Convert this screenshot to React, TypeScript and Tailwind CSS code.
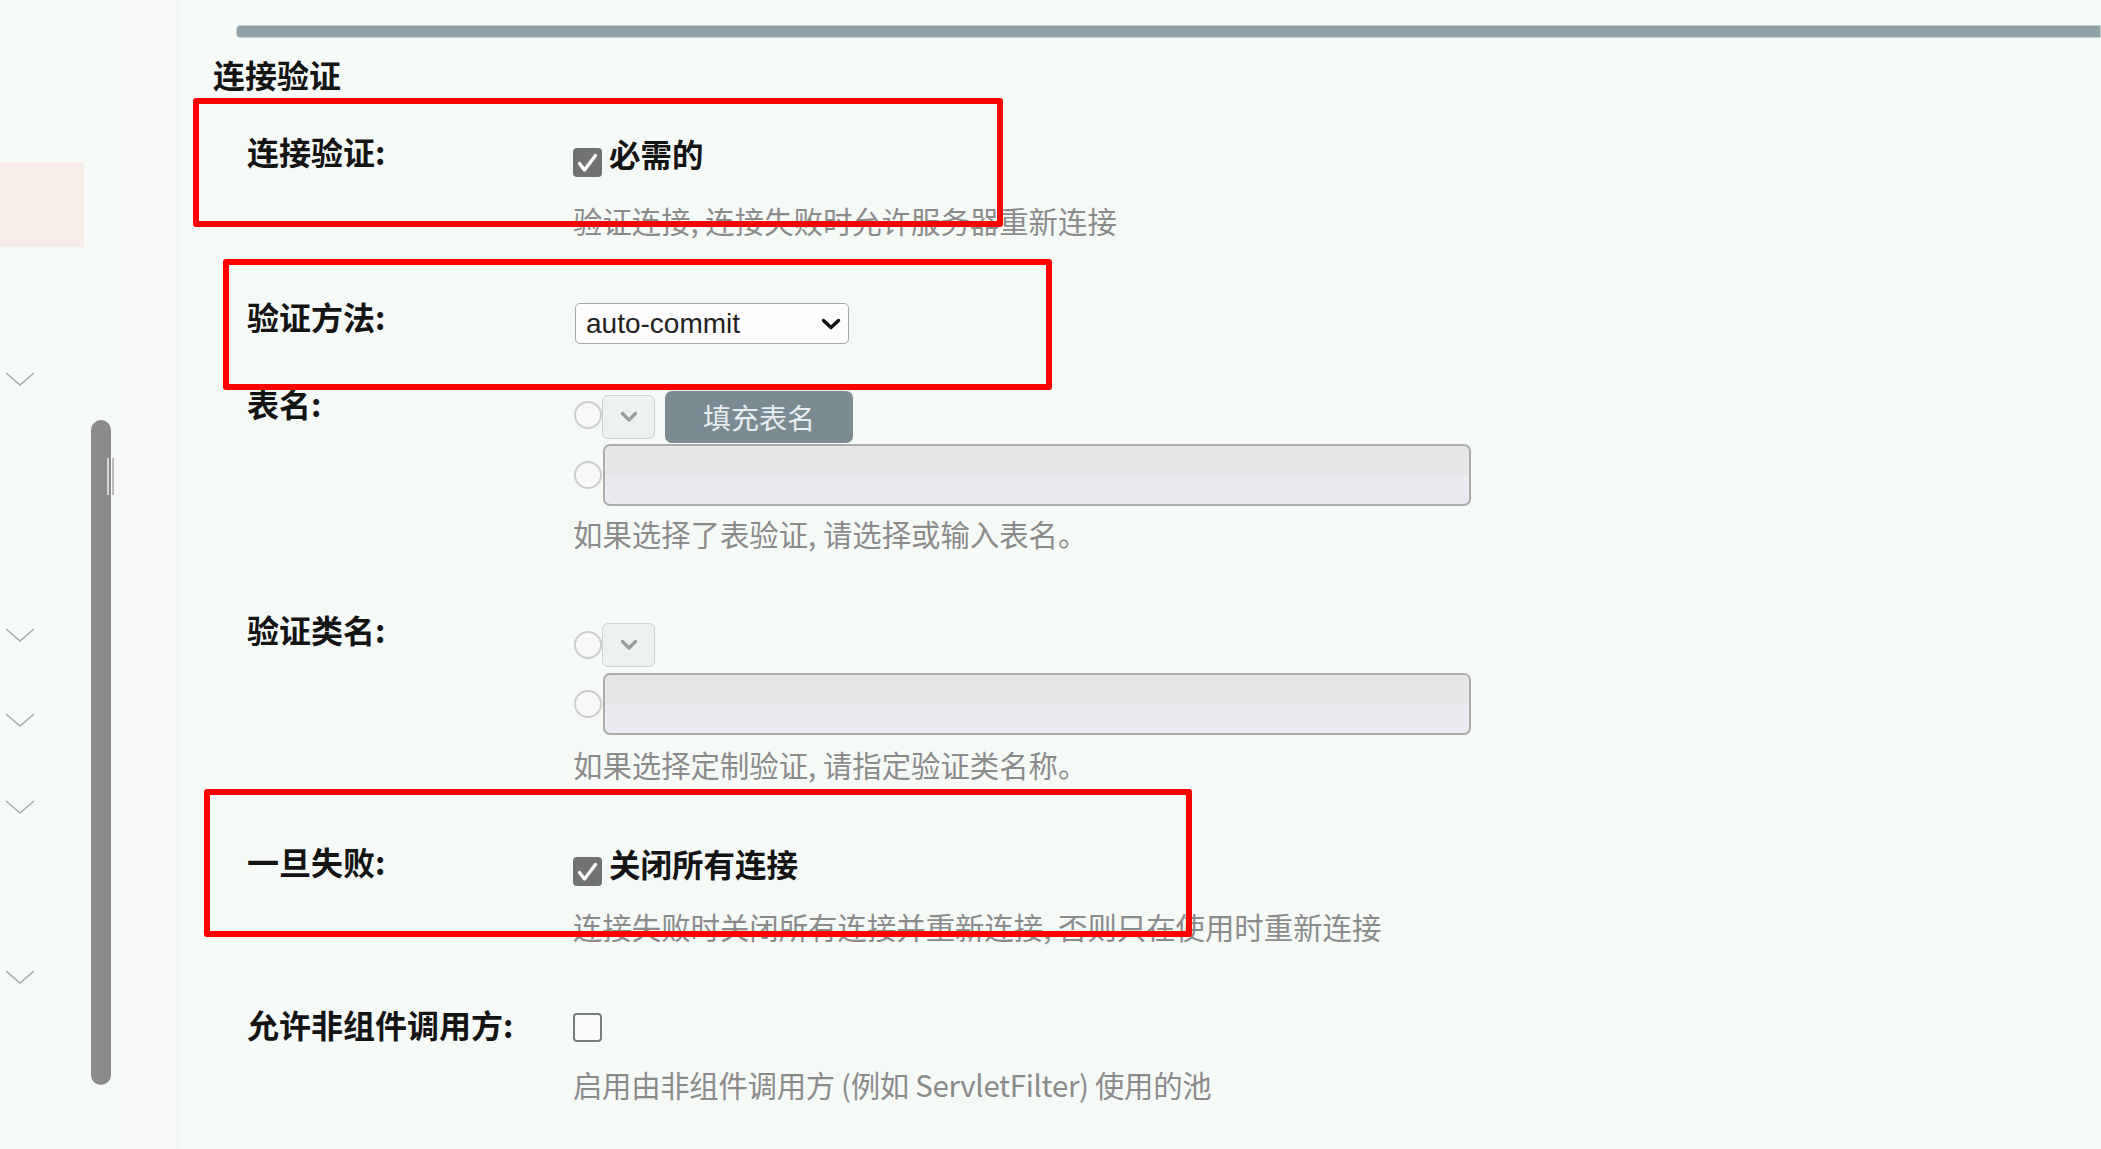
import React from 'react';

const cjk = "font-['Noto_Sans_CJK_SC',sans-serif]";

function Chevron({ className = '' }: { className?: string }) {
  return (
    <svg className={className} width="32" height="16" viewBox="0 0 32 16" fill="none">
      <path d="M2 2 L16 14 L30 2" stroke="#a9a9a9" strokeWidth="1.6" />
    </svg>
  );
}

function Check({ checked, className = '' }: { checked?: boolean; className?: string }) {
  if (!checked) {
    return <div className={`w-[29px] h-[29px] shrink-0 rounded-[4px] border-2 border-[#7c7c7c] bg-[#fbfbfb] ${className}`} />;
  }
  return (
    <div className={`w-[29px] h-[29px] shrink-0 rounded-[4px] bg-[#707370] flex items-center justify-center ${className}`}>
      <svg width="29" height="29" viewBox="0 0 29 29" fill="none">
        <path d="M6.5 15.5 L11.5 22 L22.5 7.5" stroke="#ffffff" strokeWidth="3.4" strokeLinecap="round" strokeLinejoin="round" />
      </svg>
    </div>
  );
}

function Radio({ className = '' }: { className?: string }) {
  return <div className={`w-[28px] h-[28px] shrink-0 rounded-full border-2 border-[#cdcdcd] bg-[#f8f8f8] ${className}`} />;
}

function MiniSelect({ className = '' }: { className?: string }) {
  return (
    <div className={`w-[53px] h-[44px] shrink-0 rounded-[6px] border-[1.5px] border-[#cfd2d2] bg-[#eef1f1] flex items-center justify-center ${className}`}>
      <svg width="20" height="14" viewBox="0 0 20 14" fill="none">
        <path d="M3.5 3.5 L10 10 L16.5 3.5" stroke="#999c9c" strokeWidth="3.2" strokeLinecap="round" strokeLinejoin="round" />
      </svg>
    </div>
  );
}

function TextInput() {
  return (
    <div className="ml-[1px] w-[868px] h-[62px] rounded-[7px] border-2 border-[#acacac] bg-linear-to-b from-[#e6e6e6] from-50% to-[#e9ebf0] to-50%" />
  );
}

function Label({ children }: { children: React.ReactNode }) {
  return <div className={`${cjk} text-[32px] leading-[36px] font-bold text-[#141414] whitespace-nowrap`}>{children}</div>;
}

function Desc({ children, className = '' }: { children: React.ReactNode; className?: string }) {
  return <div className={`${cjk} text-[29.4px] leading-[36px] text-[#8b8b8b] whitespace-nowrap ${className}`}>{children}</div>;
}

export default function App() {
  return (
    <div className="relative w-full h-[1149px] overflow-hidden flex bg-[#f6faf7]">
      {/* Left tree panel */}
      <div className="w-[118px] shrink-0 flex bg-[#f6faf7]">
        <div className="w-[91px] flex flex-col">
          <div className="mt-[162px] h-[85px] w-[84px] bg-[#f8ece8]" />
          <Chevron className="mt-[124px] ml-[4px]" />
          <Chevron className="mt-[240px] ml-[4px]" />
          <Chevron className="mt-[69px] ml-[4px]" />
          <Chevron className="mt-[71px] ml-[4px]" />
          <Chevron className="mt-[154px] ml-[4px]" />
        </div>
        <div className="relative mt-[420px] w-[20px] h-[665px] rounded-full bg-[#8a8a8a]">
          <div className="absolute left-[16px] top-[38px] h-[37px] w-[7px] flex justify-between">
            <div className="w-[2px] h-full bg-[#d6d6d6]" />
            <div className="w-[2px] h-full bg-[#bdbdbd]" />
          </div>
        </div>
      </div>

      {/* Middle gutter */}
      <div className="w-[60px] shrink-0 bg-[#f8f8f8] border-r border-[#edefee]" />

      {/* Main form */}
      <main className="flex-1 flex flex-col pt-[25px]">
        <div className="ml-[58px] h-[13px] bg-[#8fa0a6] border border-[#c6ced1] rounded-l-[4px]" />
        <h2 className={`${cjk} ml-[35px] mt-[18px] text-[32px] leading-[36px] font-bold text-[#141414]`}>连接验证</h2>

        <div className="ml-[69px] flex flex-col">
          {/* 连接验证 */}
          <div className="mt-[41px] grid grid-cols-[326px_1fr]">
            <Label>连接验证:</Label>
            <div className="flex flex-col">
              <div className="flex items-start gap-[7px]">
                <Check checked className="mt-[15px]" />
                <span className={`${cjk} mt-[2px] text-[31.5px] leading-[36px] font-bold text-[#141414]`}>必需的</span>
              </div>
              <Desc className="mt-[25px]">验证连接, 连接失败时允许服务器重新连接</Desc>
            </div>
          </div>

          {/* 验证方法 */}
          <div className="mt-[60px] grid grid-cols-[326px_1fr]">
            <Label>验证方法:</Label>
            <div className="flex flex-col">
              <div className="mt-[5px] ml-[2px] w-[274px] h-[41px] rounded-[5px] border-[1.5px] border-[#a9a9a9] bg-[#fdfdfd] flex items-center justify-between pl-[10px] pr-[7px]">
                <span className="font-['Liberation_Sans',sans-serif] text-[28px] leading-none text-[#222]">auto-commit</span>
                <svg width="20" height="12" viewBox="0 0 20 12" fill="none">
                  <path d="M2.5 2.5 L10 9.5 L17.5 2.5" stroke="#111" strokeWidth="3.4" strokeLinecap="round" strokeLinejoin="round" />
                </svg>
              </div>
            </div>
          </div>

          {/* 表名 */}
          <div className="mt-[41px] grid grid-cols-[326px_1fr]">
            <Label>表名:</Label>
            <div className="flex flex-col">
              <div className="flex items-start">
                <Radio className="ml-[1px] mt-[16px]" />
                <MiniSelect className="mt-[10px]" />
                <button className={`${cjk} ml-[10px] mt-[6px] w-[188px] h-[52px] rounded-[7px] bg-[#7b8b92] text-[28px] leading-none text-[#e6eef2]`}>
                  填充表名
                </button>
              </div>
              <div className="mt-[1px] flex items-center">
                <Radio className="ml-[1px]" />
                <TextInput />
              </div>
              <Desc className="mt-[9px]">如果选择了表验证, 请选择或输入表名。</Desc>
            </div>
          </div>

          {/* 验证类名 */}
          <div className="mt-[60px] grid grid-cols-[326px_1fr]">
            <Label>验证类名:</Label>
            <div className="flex flex-col">
              <div className="mt-[12px] flex items-center">
                <Radio className="ml-[1px]" />
                <MiniSelect />
              </div>
              <div className="mt-[6px] flex items-center">
                <Radio className="ml-[1px]" />
                <TextInput />
              </div>
              <Desc className="mt-[11px]">如果选择定制验证, 请指定验证类名称。</Desc>
            </div>
          </div>

          {/* 一旦失败 */}
          <div className="mt-[61px] grid grid-cols-[326px_1fr]">
            <Label>一旦失败:</Label>
            <div className="flex flex-col">
              <div className="flex items-start gap-[7px]">
                <Check checked className="mt-[14px]" />
                <span className={`${cjk} mt-[2px] text-[31.5px] leading-[36px] font-bold text-[#141414]`}>关闭所有连接</span>
              </div>
              <Desc className="mt-[22px]">连接失败时关闭所有连接并重新连接, 否则只在使用时重新连接</Desc>
            </div>
          </div>

          {/* 允许非组件调用方 */}
          <div className="mt-[62px] grid grid-cols-[326px_1fr]">
            <Label>允许非组件调用方:</Label>
            <div className="flex flex-col">
              <Check className="mt-[7px]" />
              <Desc className="mt-[24px] tracking-[-0.3px]">启用由非组件调用方 (例如 ServletFilter) 使用的池</Desc>
            </div>
          </div>
        </div>
      </main>

      {/* Red annotation boxes */}
      <div className="pointer-events-none absolute left-[193px] top-[98px] w-[810px] h-[129px] border-[6px] border-[#ff0000] rounded-[3px]" />
      <div className="pointer-events-none absolute left-[223px] top-[259px] w-[829px] h-[131px] border-[6px] border-[#ff0000] rounded-[3px]" />
      <div className="pointer-events-none absolute left-[204px] top-[789px] w-[988px] h-[148px] border-[6px] border-[#ff0000] rounded-[3px]" />
    </div>
  );
}
